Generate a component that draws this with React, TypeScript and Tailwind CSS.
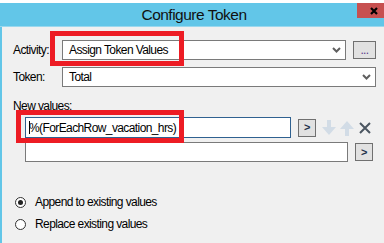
import { type ReactNode } from "react";

function Chevron() {
    return (
        <svg width="9" height="6" viewBox="0 0 9 6" className="shrink-0">
            <polyline points="1,1 4.5,4.5 8,1" fill="none" stroke="#5f5f5f" strokeWidth="2" />
        </svg>
    );
}

function Combo({ value, width }: { value: string; width: string }) {
    return (
        <div className={`${width} flex h-[20px] items-center justify-between border border-[#7a7a7a] bg-white pl-[6px] pr-[4px]`}>
            <span>{value}</span>
            <Chevron />
        </div>
    );
}

function SmallButton({ children, className = "" }: { children: ReactNode; className?: string }) {
    return (
        <div className={`flex h-[18px] items-center justify-center border border-[#707070] bg-[#e1e1e1] ${className}`}>
            {children}
        </div>
    );
}

function Radio({ checked, label }: { checked?: boolean; label: string }) {
    return (
        <div className="flex h-[16px] items-center">
            <div className="ml-[2px] flex h-[11px] w-[11px] items-center justify-center rounded-full border border-[#333333] bg-white">
                {checked && <div className="h-[5px] w-[5px] rounded-full bg-[#222222]" />}
            </div>
            <span className="ml-[9px] leading-[15px]">{label}</span>
        </div>
    );
}

export default function App() {
    return (
        <div className="relative flex h-[243px] w-[384px] flex-col overflow-hidden bg-[#f0f0f0] font-['Liberation_Sans',Arial,sans-serif] text-[12px] tracking-[-0.6px] text-black">
            <div className="h-[3px] bg-white" />
            <div className="relative flex h-[24px] items-center justify-center border-b border-[#9ad8ee] bg-[#62c6e8] pl-[4px]">
                <span className="text-[15.5px] tracking-[-0.5px] text-[#111111]">Configure Token</span>
                <div className="absolute right-0 top-0 flex h-[15px] w-[27px] items-center bg-[#c75050] pl-[13px]">
                    <svg width="8" height="8" viewBox="0 0 8 8">
                        <path d="M1 1 L7 7 M7 1 L1 7" stroke="#000" strokeWidth="2.2" />
                    </svg>
                </div>
            </div>

            <div className="flex flex-1 flex-col border-l-2 border-[#62c6e8] pl-[11px]">
                {/* Activity */}
                <div className="mt-[13px] flex items-center">
                    <span className="w-[49px] leading-[15px]">Activity:</span>
                    <Combo value="Assign Token Values" width="w-[284px]" />
                    <SmallButton className="ml-[7px] w-[23px]">
                        <span className="text-[#5b3a8c]">...</span>
                    </SmallButton>
                </div>

                {/* Token */}
                <div className="mt-[7px] flex items-center">
                    <span className="w-[49px] leading-[15px]">Token:</span>
                    <Combo value="Total" width="w-[314px]" />
                </div>

                <div className="mt-[12px] leading-[15px]">New values:</div>

                {/* value rows */}
                <div className="mt-[3px] flex items-center pl-[12px]">
                    <div className="flex h-[21px] w-[266px] items-center border border-[#2f6190] bg-white pl-[3px]">
                        <span className="mr-[-1px] h-[13px] w-[1px] bg-black" />
                        <span>%(ForEachRow_vacation_hrs)</span>
                    </div>
                    <SmallButton className="ml-[7px] w-[18px]">
                        <span className="text-[11px] font-bold leading-none text-[#1e2f4a]">&gt;</span>
                    </SmallButton>
                    <svg width="14" height="16" viewBox="0 0 14 16" className="ml-[6px]">
                        <path d="M5 0 H9 V7 H14 L7 15 L0 7 H5 Z" fill="#d2dce6" />
                    </svg>
                    <svg width="14" height="16" viewBox="0 0 14 16" className="ml-[4px]">
                        <path d="M5 16 H9 V9 H14 L7 1 L0 9 H5 Z" fill="#d2dce6" />
                    </svg>
                    <svg width="12" height="12" viewBox="0 0 12 12" className="ml-[5px]">
                        <path d="M1 1 L11 11 M11 1 L1 11" stroke="#4b5661" strokeWidth="2" />
                    </svg>
                </div>

                <div className="mt-[4px] flex items-center pl-[12px]">
                    <div className="h-[20px] w-[323px] border border-[#7a7a7a] bg-white" />
                    <SmallButton className="ml-[7px] w-[18px]">
                        <span className="text-[11px] font-bold leading-none text-[#1e2f4a]">&gt;</span>
                    </SmallButton>
                </div>

                <div className="mt-[32px]">
                    <Radio checked label="Append to existing values" />
                </div>
                <div className="mt-[6px]">
                    <Radio label="Replace existing values" />
                </div>
            </div>

            {/* red annotation boxes */}
            <div className="absolute left-[50px] top-[31px] h-[35px] w-[134px] border-[5px] border-[#ed1c24]" />
            <div className="absolute left-[16px] top-[110px] h-[33px] w-[168px] border-[5px] border-[#ed1c24]" />
        </div>
    );
}
